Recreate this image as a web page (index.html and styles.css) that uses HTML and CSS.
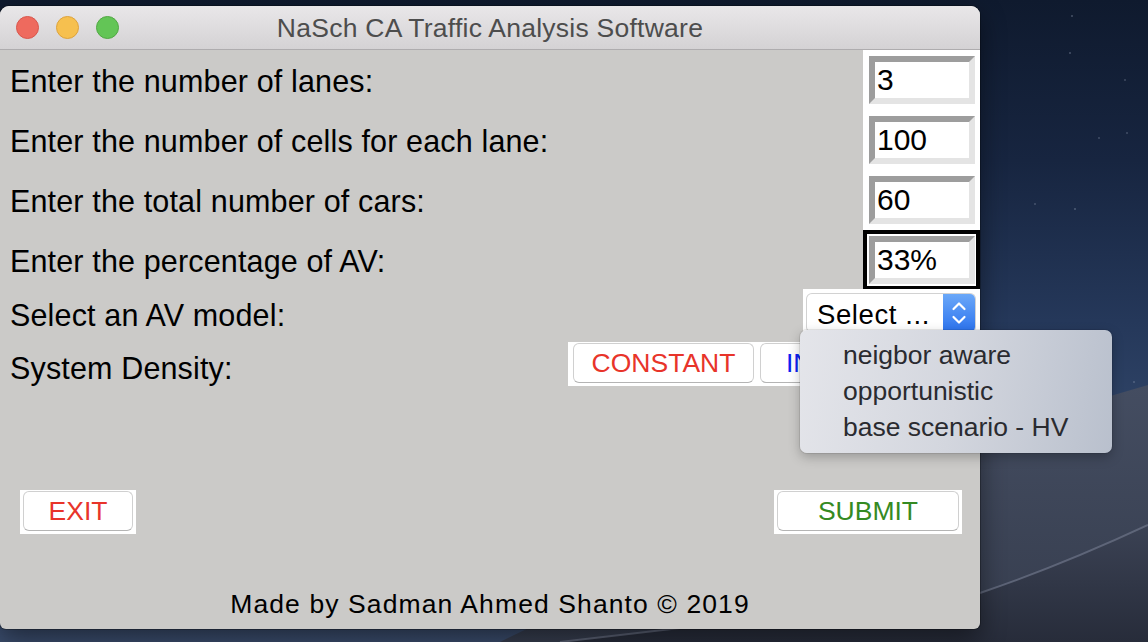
FILE: index.html
```html
<!DOCTYPE html>
<html>
<head>
<meta charset="utf-8">
<title>NaSch CA Traffic Analysis Software</title>
<link rel="stylesheet" href="styles.css">
</head>
<body>
<div class="desktop">
  <svg class="wallpaper" width="1148" height="642" viewBox="0 0 1148 642">
    <defs>
      <linearGradient id="sky" x1="0" y1="0" x2="0" y2="1">
        <stop offset="0" stop-color="#0f1a2e"/>
        <stop offset="0.25" stop-color="#172540"/>
        <stop offset="0.5" stop-color="#25385a"/>
        <stop offset="0.7" stop-color="#32476a"/>
        <stop offset="1" stop-color="#3a4c6c"/>
      </linearGradient>
      <linearGradient id="dune" x1="0" y1="0" x2="0" y2="1">
        <stop offset="0" stop-color="#444d61"/>
        <stop offset="1" stop-color="#363d4e"/>
      </linearGradient>
      <linearGradient id="dune2" x1="0" y1="0" x2="0" y2="1">
        <stop offset="0" stop-color="#3b4254"/>
        <stop offset="1" stop-color="#272c3a"/>
      </linearGradient>
    </defs>
    <rect width="1148" height="642" fill="url(#sky)"/>
    <path d="M500 642 Q850 470 1148 385 V642 Z" fill="url(#dune)"/>
    <path d="M560 642 L980 593 Q1060 566 1148 525 V642 Z" fill="url(#dune2)"/>
    <path d="M560 642 L980 593 Q1060 566 1148 525" fill="none" stroke="#6d7589" stroke-width="2" opacity="0.7"/>
    <g fill="#c9d3e6" opacity="0.5">
      <circle cx="1072" cy="16" r="0.8"/>
      <circle cx="1070" cy="53" r="0.8"/>
      <circle cx="1125" cy="80" r="0.7"/>
      <circle cx="1099" cy="138" r="0.7"/>
      <circle cx="1127" cy="133" r="0.7"/>
      <circle cx="1035" cy="204" r="0.7"/>
      <circle cx="1075" cy="209" r="0.8"/>
      <circle cx="1134" cy="382" r="0.7"/>
    </g>
  </svg>

  <div class="window">
    <div class="titlebar">
      <div class="lights">
        <span class="light red"></span>
        <span class="light yellow"></span>
        <span class="light green"></span>
      </div>
      <div class="title">NaSch CA Traffic Analysis Software</div>
      <div class="spacer"></div>
    </div>

    <div class="content">
      <div class="row">
        <span class="label">Enter the number of lanes:</span>
        <div class="entry-cell"><div class="entry">3</div></div>
      </div>
      <div class="row">
        <span class="label">Enter the number of cells for each lane:</span>
        <div class="entry-cell"><div class="entry">100</div></div>
      </div>
      <div class="row">
        <span class="label">Enter the total number of cars:</span>
        <div class="entry-cell"><div class="entry">60</div></div>
      </div>
      <div class="row">
        <span class="label">Enter the percentage of AV:</span>
        <div class="entry-cell focused"><div class="entry">33%</div></div>
      </div>
      <div class="row row-select">
        <span class="label">Select an AV model:</span>
        <div class="select-cell">
          <div class="select">
            <span class="select-text">Select ...</span>
            <span class="stepper">
              <svg width="32" height="38" viewBox="0 0 32 38">
                <path d="M10.5 15 L16 9.5 L21.5 15" fill="none" stroke="#ffffff" stroke-width="2.2" stroke-linecap="round" stroke-linejoin="round"/>
                <path d="M10.5 23 L16 28.5 L21.5 23" fill="none" stroke="#ffffff" stroke-width="2.2" stroke-linecap="round" stroke-linejoin="round"/>
              </svg>
            </span>
          </div>
        </div>
      </div>
      <div class="row row-density">
        <span class="label label-density">System Density:</span>
        <div class="btn-strip density-strip">
          <button class="btn btn-red btn-constant">CONSTANT</button>
          <button class="btn btn-blue btn-increasing">IN</button>
        </div>
      </div>

      <div class="actions">
        <div class="btn-strip"><button class="btn btn-red btn-exit">EXIT</button></div>
        <div class="btn-strip"><button class="btn btn-green btn-submit">SUBMIT</button></div>
      </div>

      <div class="footer">Made by Sadman Ahmed Shanto © 2019</div>
    </div>

    <div class="popup">
      <div class="popup-item">neigbor aware</div>
      <div class="popup-item">opportunistic</div>
      <div class="popup-item">base scenario - HV</div>
    </div>
  </div>
</div>
</body>
</html>
```

FILE: styles.css
```css
html, body {
  margin: 0;
  padding: 0;
}

body {
  width: 1148px;
  height: 642px;
  overflow: hidden;
  font-family: "Liberation Sans", Arial, sans-serif;
  background: #1a2740;
}

.desktop {
  display: grid;
  width: 1148px;
  height: 642px;
}

.wallpaper {
  grid-area: 1 / 1;
  display: block;
}

.window {
  grid-area: 1 / 1;
  align-self: start;
  justify-self: start;
  position: relative;
  width: 980px;
  height: 623px;
  margin-top: 6px;
  border-radius: 9px 9px 6px 6px;
  background: #cbcac8;
  box-shadow: 0 0 0 1px rgba(0, 0, 0, 0.25), 0 10px 26px rgba(0, 0, 0, 0.45);
  display: flex;
  flex-direction: column;
}

/* Title bar */
.titlebar {
  height: 43px;
  flex: none;
  border-bottom: 1px solid #aeacae;
  border-radius: 9px 9px 0 0;
  background: linear-gradient(#e9e7e9, #d4d2d4);
  display: grid;
  grid-template-columns: 1fr auto 1fr;
  align-items: center;
}

.lights {
  display: flex;
  gap: 17px;
  padding-left: 16px;
  margin-top: -1px;
}

.light {
  width: 23px;
  height: 23px;
  border-radius: 50%;
  box-sizing: border-box;
}

.light.red { background: #ee6a5e; border: 1px solid #d9564c; }
.light.yellow { background: #f6c04f; border: 1px solid #dea33b; }
.light.green { background: #63c556; border: 1px solid #51a843; }

.title {
  font-size: 26.5px;
  letter-spacing: 0.25px;
  color: #4d4d4d;
  margin-top: 1px;
}

/* Content */
.content {
  flex: 1;
  display: flex;
  flex-direction: column;
}

.row {
  display: flex;
  justify-content: space-between;
  align-items: center;
  height: 60px;
}

.label {
  font-size: 30.5px;
  letter-spacing: 0.15px;
  color: #000;
  padding-left: 10px;
  line-height: 34px;
  white-space: nowrap;
  margin-top: 1px;
}

.entry-cell {
  width: 117px;
  height: 60px;
  box-sizing: border-box;
  background: #fff;
  border: 4px solid #fff;
  padding: 2px 0 2px 2px;
}

.entry-cell.focused {
  border-color: #000;
}

.entry {
  box-sizing: border-box;
  width: 106px;
  height: 48px;
  border-style: solid;
  border-width: 6px;
  border-color: #9d9d9d #e4e4e4 #e4e4e4 #9d9d9d;
  background: #fff;
  font-size: 30px;
  line-height: 36px;
  padding-left: 2px;
  color: #000;
}

/* Select */
.row-select {
  height: 48px;
}

.select-cell {
  width: 177px;
  height: 48px;
  box-sizing: border-box;
  background: #fff;
  padding: 4px 4px 4px 3px;
  align-self: start;
  margin-top: -1px;
}

.select {
  height: 40px;
  box-sizing: border-box;
  border: 1px solid #d2d2d2;
  border-bottom-color: #bdbdbd;
  border-radius: 6px;
  display: flex;
  align-items: center;
  justify-content: space-between;
  background: #fff;
}

.select-text {
  font-size: 27.5px;
  letter-spacing: 0.6px;
  padding-left: 10px;
  margin-top: 3px;
  color: #000;
}

.stepper {
  width: 32px;
  height: 38px;
  border-radius: 0 5px 5px 0;
  background: linear-gradient(#6ba8f8, #2b72ee);
  display: flex;
}

.stepper svg {
  display: block;
}

/* Buttons */
.row-density {
  height: 44px;
  margin-top: 4px;
}

.label-density {
  margin-top: 8px;
}

.btn-strip {
  background: #fff;
  padding: 1px 3px 3px 3px;
  display: flex;
  gap: 6px;
}

.density-strip {
  padding-left: 5px;
}

.btn {
  height: 40px;
  box-sizing: border-box;
  background: #fff;
  border: 1px solid #d0d0d0;
  border-bottom-color: #b4b4b4;
  border-radius: 6px;
  font-family: "Liberation Sans", Arial, sans-serif;
  font-size: 26.5px;
  padding: 0;
  margin: 0;
  line-height: 38px;
  text-align: center;
}

.btn-red { color: #e8342a; }
.btn-blue { color: #0c22f2; }
.btn-green { color: #358a22; }

.btn-constant { width: 181px; }
.btn-increasing {
  width: 217px;
  text-align: left;
  padding-left: 25px;
}
.btn-exit { width: 110px; }
.btn-submit { width: 182px; }

.actions {
  display: flex;
  justify-content: space-between;
  padding: 0 18px 0 20px;
  margin-top: 104px;
}

.footer {
  margin-top: auto;
  text-align: center;
  font-size: 26.5px;
  letter-spacing: 1.1px;
  line-height: 30px;
  padding-bottom: 10px;
  color: #000;
}

/* Dropdown popup */
.popup {
  position: absolute;
  left: 800px;
  top: 324px;
  width: 312px;
  height: 123px;
  box-sizing: border-box;
  border-radius: 7px;
  background: linear-gradient(100deg, #e4e5ea 0%, #d3d6de 50%, #b9c0cd 100%);
  box-shadow: 0 0 0 1px rgba(0, 0, 0, 0.08), 0 4px 12px rgba(0, 0, 0, 0.25);
  padding-top: 7px;
}

.popup-item {
  font-size: 26.5px;
  line-height: 36px;
  padding-left: 43px;
  color: #2a2b30;
}
```
